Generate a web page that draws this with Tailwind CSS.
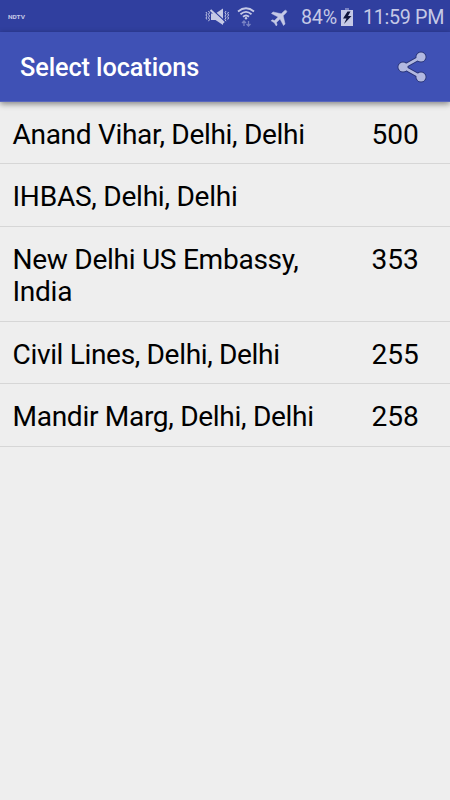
<!DOCTYPE html>
<html lang="en">
<head>
  <meta charset="UTF-8" />
  <meta name="viewport" content="width=device-width, initial-scale=1" />
  <title>Select locations</title>
  <script src="https://cdn.jsdelivr.net/npm/@tailwindcss/browser@4"></script>
</head>
<body class="bg-[#eeeeee] font-[Roboto,sans-serif] text-black h-screen overflow-hidden">
  <!-- Status bar -->
  <div class="flex h-[32px] items-center justify-between bg-[#303f9f] pt-[3px] pl-2 pr-[7px] text-[#c5c9e6]">
    <span class="inline-block origin-left scale-y-75 text-[6.5px] leading-none font-bold">NDTV</span>
    <div class="flex items-center">
      <svg class="w-[26px] h-[20px] mr-[6px]" viewBox="0 0 26 20" fill="currentColor">
        <path d="M6 6.500h4.500L18 1.500v16.500l-7.500-5H6z" />
        <path d="M6.500 2L19.500 14" stroke="#303f9f" stroke-width="1.400" />
        <path d="M5.500 3L19 15.800" stroke="currentColor" stroke-width="2" />
        <path d="M3.500 4l1 1.700-1 1.700 1 1.700-1 1.700 1 1.700-1 1.700M1 5l.8 1.500L1 8l.8 1.500L1 11l.8 1.500M21 4l-1 1.700 1 1.700-1 1.700 1 1.700-1 1.700 1 1.700M23.500 5l-.8 1.500.8 1.500-.8 1.500.8 1.500-.8 1.500" fill="none" stroke="currentColor" stroke-width="1" />
      </svg>
      <svg class="w-[18px] h-[20px] mr-[16px]" viewBox="0 0 18 20" fill="none" stroke="currentColor">
        <path d="M1 4.500Q9-2 17 4.500M3.500 7.200Q9 2.500 14.500 7.200M6 9.800Q9 7.200 12 9.800" stroke-width="1.800" />
        <circle cx="9" cy="11.300" r="1.200" fill="currentColor" stroke="none" />
        <path d="M7 19v-5M5 16l2-2 2 2M11.500 14v5M9.500 17l2 2 2-2" stroke="#7983c4" stroke-width="1.300" />
      </svg>
      <svg class="w-[18px] h-[18px] mr-[12px]" viewBox="2 2 20 20" fill="currentColor">
        <path transform="rotate(45 12 12)" d="M21.500 16v-2.500l-8-5V3.500a1.500 1.500 0 0 0-3 0v5l-8 5V16l8-2.500V19l-2.500 1.500V22l4-1 4 1v-1.500L13.500 19v-5.500z" stroke="currentColor" stroke-width=".5" />
      </svg>
      <span class="text-[19.7px] leading-none w-[37px] pt-px whitespace-nowrap tracking-[-0.2px]">84%</span>
      <svg class="w-[12px] h-[18px] ml-[3px] mr-[10px]" viewBox="0 0 12 18">
        <path d="M4 0h4v2h4v16H0V2h4z" fill="#c5c9e6" />
        <path d="M4 0h4v2H4z" fill="#7983c4" />
        <path d="M6.500 3.500L2 10.500h3.500L3 16l7.500-8H7l2.500-4.500z" fill="#10153a" />
      </svg>
      <span class="text-[19.7px] leading-none w-[80px] pt-px whitespace-nowrap tracking-[-0.3px]">11:59 PM</span>
    </div>
  </div>

  <!-- App bar -->
  <header class="relative flex h-[70px] items-center justify-between bg-[#3f51b5] border-b border-[#5866bd] pl-5 pr-[22px] shadow-[0_2px_6px_rgba(0,0,0,0.45)]">
    <h1 class="text-[25.3px] leading-none font-medium text-white pt-[3px] tracking-[-0.1px]">Select locations</h1>
    <button aria-label="Share">
      <svg class="w-[32px] h-[32px]" viewBox="0 0 32 32">
        <g fill="#283375" stroke="#283375">
          <path d="M25 6L7 16l18 10" fill="none" stroke-width="4.500" />
          <circle cx="25" cy="6" r="5" />
          <circle cx="7" cy="16" r="5" />
          <circle cx="25" cy="26" r="5" />
        </g>
        <path d="M25 6L7 16l18 10" fill="none" stroke="#b2b9e1" stroke-width="2.600" />
        <g fill="#b2b9e1">
          <circle cx="25" cy="6" r="4.600" />
          <circle cx="7" cy="16" r="4.600" />
          <circle cx="25" cy="26" r="4.600" />
        </g>
      </svg>
    </button>
  </header>

  <!-- Locations list -->
  <ul class="text-[28.1px] leading-[32.5px]">
    <li class="flex h-[62px] border-b border-[#d6d6d6] pt-[17px] pl-[12.500px]">
      <span class="w-[359px] tracking-[-0.34px]">Anand Vihar, Delhi, Delhi</span>
      <span>500</span>
    </li>
    <li class="flex h-[63px] border-b border-[#d6d6d6] pt-[17px] pl-[12.500px]">
      <span class="w-[359px] tracking-[-0.27px]">IHBAS, Delhi, Delhi</span>
    </li>
    <li class="flex h-[95px] border-b border-[#d6d6d6] pt-[17px] pl-[12.500px]">
      <span class="w-[359px] leading-[32px] tracking-[-0.3px]">New Delhi US Embassy,<br />India</span>
      <span>353</span>
    </li>
    <li class="flex h-[62px] border-b border-[#d6d6d6] pt-[17px] pl-[12.500px]">
      <span class="w-[359px] tracking-[-0.36px]">Civil Lines, Delhi, Delhi</span>
      <span>255</span>
    </li>
    <li class="flex h-[63px] border-b border-[#d6d6d6] pt-[17px] pl-[12.500px]">
      <span class="w-[359px] tracking-[-0.32px]">Mandir Marg, Delhi, Delhi</span>
      <span>258</span>
    </li>
  </ul>
</body>
</html>
